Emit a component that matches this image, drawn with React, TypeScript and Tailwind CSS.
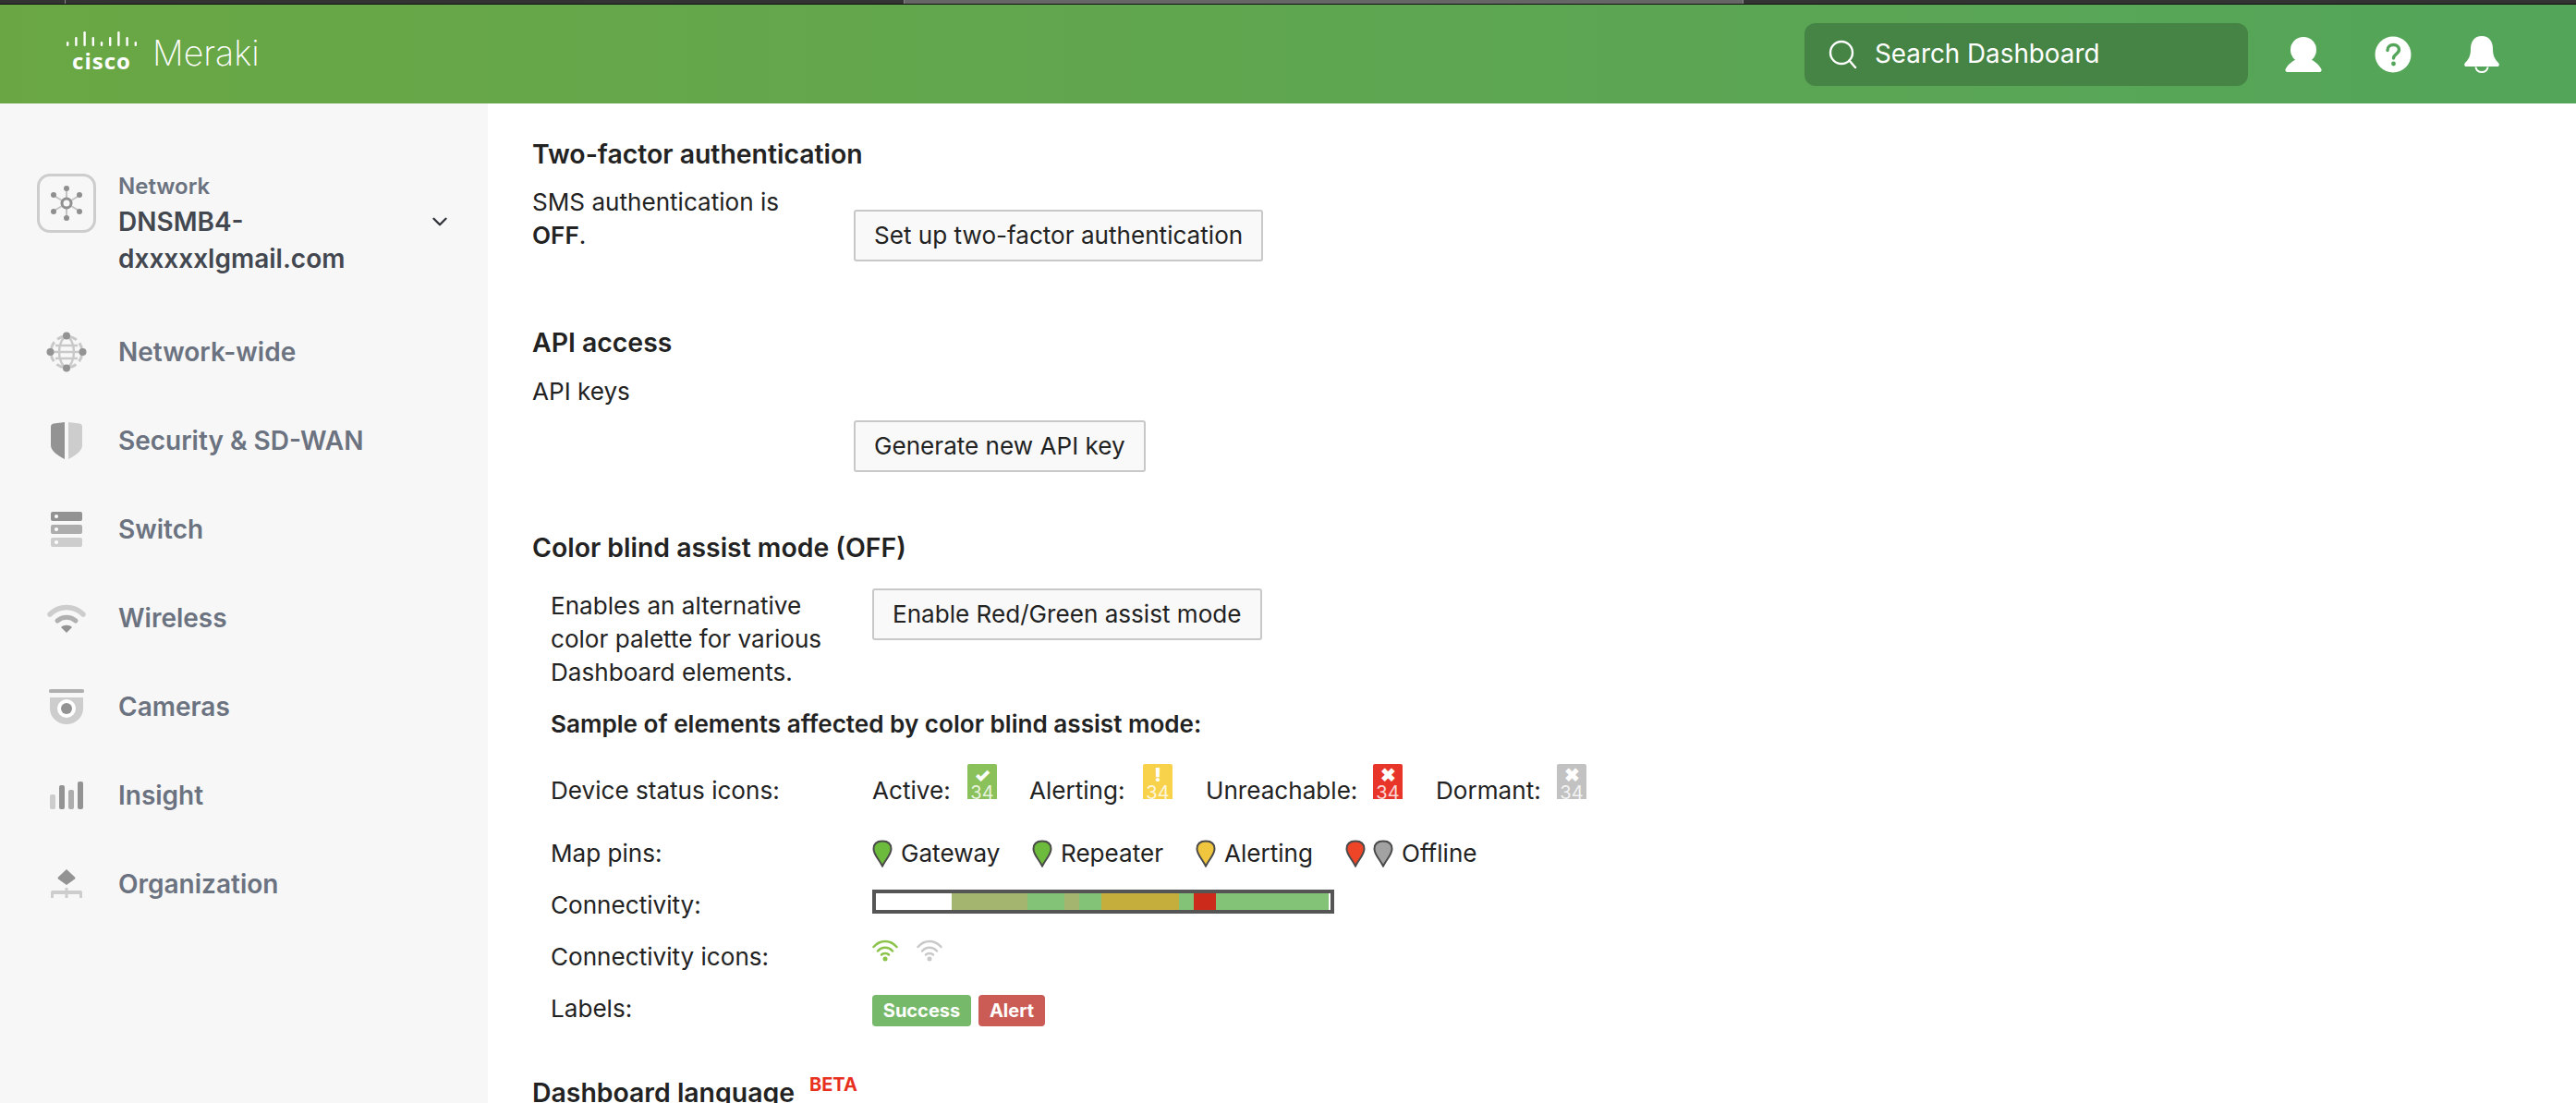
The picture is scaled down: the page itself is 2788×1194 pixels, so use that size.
import { ChevronDown } from 'lucide-react'
import type { ReactNode } from 'react'

function CiscoLogo() {
    const bars = [
        [0, 11, 5], [9.2, 6, 10], [18.4, 0, 16], [27.6, 6, 10], [36.8, 11, 5], [46, 6, 10], [55.2, 0, 16], [64.4, 6, 10], [73.6, 11, 5],
    ]
    return (
        <div className="flex flex-col items-center w-[76px]">
            <svg width="76" height="16" viewBox="0 0 76 16" fill="#fff">
                {bars.map(([x, y, h]) => <rect key={x} x={x} y={y} width="2.4" height={h} rx="1.2" />)}
            </svg>
            <span className="mt-[4px] text-white text-[24px] leading-[24px] font-bold tracking-[1px] font-['Open_Sans',sans-serif]">cisco</span>
        </div>
    )
}

function NavIcon({ name }: { name: string }) {
    if (name === 'network') return (
        <svg width="44" height="44" viewBox="0 0 44 44" fill="none">
            <circle cx="22" cy="22" r="17" stroke="#c9c9c9" strokeWidth="3" strokeDasharray="9 4.400" strokeDashoffset="-2" />
            <ellipse cx="22" cy="22" rx="8" ry="16" stroke="#c9c9c9" strokeWidth="2.500" />
            <path d="M6 22h32M10 15h24M10 29h24" stroke="#c9c9c9" strokeWidth="2.500" />
            <circle cx="22" cy="4.500" r="4" fill="#939393" /><circle cx="22" cy="39.500" r="4" fill="#939393" />
            <circle cx="4.500" cy="22" r="4" fill="#939393" /><circle cx="39.500" cy="22" r="4" fill="#939393" />
        </svg>
    )
    if (name === 'shield') return (
        <svg width="34" height="40" viewBox="0 0 34 40">
            <path d="M15 0v40C7 36 0 31 0 25V5c0-2 1-3 3-3.500z" fill="#939393" />
            <path d="M19 0v40c8-4 15-9 15-15V5c0-2-1-3-3-3.500z" fill="#cdcdcd" />
        </svg>
    )
    if (name === 'switch') return (
        <svg width="34" height="38" viewBox="0 0 34 38">
            <rect width="34" height="10" y="0" rx="2" fill="#939393" /><rect width="34" height="10" y="14" rx="2" fill="#adadad" /><rect width="34" height="10" y="28" rx="2" fill="#cdcdcd" />
            <circle cx="6" cy="5" r="2" fill="#fff" /><circle cx="6" cy="19" r="2" fill="#fff" /><circle cx="6" cy="33" r="2" fill="#fff" />
        </svg>
    )
    if (name === 'wifi') return (
        <svg width="42" height="32" viewBox="0 0 42 32" fill="none">
            <path d="M3 12C13 2 29 2 39 12" stroke="#cdcdcd" strokeWidth="5.500" strokeLinecap="round" />
            <path d="M11 19c6-5 14-5 20 0" stroke="#b0b0b0" strokeWidth="5" strokeLinecap="round" />
            <path d="M15 26c3-3 9-3 12 0l-6 6z" fill="#939393" />
        </svg>
    )
    if (name === 'camera') return (
        <svg width="38" height="38" viewBox="0 0 38 38">
            <rect width="38" height="4" rx="1.500" fill="#b0b0b0" />
            <path d="M1 9h36v12a18 17 0 0 1-36 0z" fill="#cdcdcd" />
            <circle cx="19" cy="21" r="10" fill="#fff" /><circle cx="19" cy="21" r="6" fill="#939393" />
        </svg>
    )
    if (name === 'insight') return (
        <svg width="36" height="30" viewBox="0 0 36 30">
            <rect x="0" y="14" width="6" height="16" rx="2" fill="#cdcdcd" /><rect x="10" y="4" width="6" height="26" rx="2" fill="#939393" />
            <rect x="20" y="9" width="6" height="21" rx="2" fill="#adadad" /><rect x="30" y="0" width="6" height="30" rx="2" fill="#939393" />
        </svg>
    )
    return (
        <svg width="34" height="32" viewBox="0 0 34 32">
            <path d="M17 0l9 8.500a1.500 1.500 0 0 1 0 2L17 17 8 10.500a1.500 1.500 0 0 1 0-2z" fill="#939393" />
            <path d="M15.500 20h3v3H32a2 2 0 0 1 2 2v6h-3v-4H18.500v4h-3v-4H3v4H0v-6a2 2 0 0 1 2-2h13.500z" fill="#cdcdcd" />
        </svg>
    )
}

const navItems = [
    { icon: 'network', label: 'Network-wide' },
    { icon: 'shield', label: 'Security & SD-WAN' },
    { icon: 'switch', label: 'Switch' },
    { icon: 'wifi', label: 'Wireless' },
    { icon: 'camera', label: 'Cameras' },
    { icon: 'insight', label: 'Insight' },
    { icon: 'org', label: 'Organization' },
]

function Sidebar() {
    return (
        <aside className="w-[528px] shrink-0 bg-[#f7f7f7] pt-[76px]">
            <div className="flex pl-[40px]">
                <div className="w-[64px] h-[64px] rounded-[14px] border-[3px] border-[#cdcdcd] flex items-center justify-center">
                    <svg width="36" height="40" viewBox="0 0 36 40" fill="none">
                        <path d="M18 6v28M3 11l30 18M33 11L3 29" stroke="#c4c4c4" strokeWidth="2" />
                        <circle cx="18" cy="20" r="5" fill="#f7f7f7" stroke="#8f8f8f" strokeWidth="3" />
                        {[[18, 4], [18, 36], [4, 11], [32, 11], [4, 29], [32, 29]].map(([cx, cy]) => <circle key={`${cx}-${cy}`} cx={cx} cy={cy} r="3" fill="#8f8f8f" />)}
                    </svg>
                </div>
                <div className="ml-[24px] w-[300px] font-semibold">
                    <div className="text-[24px] leading-[28px] text-[#6b7280]">Network</div>
                    <div className="text-[28px] leading-[40px] mt-[4px] text-[#434750]">DNSMB4-<br />dxxxxxlgmail.com</div>
                </div>
                <ChevronDown className="mt-[39px] ml-[35px] text-[#30343a]" size={26} strokeWidth={2.2} />
            </div>
            <nav className="mt-[33px] flex flex-col">
                {navItems.map(item => (
                    <div key={item.label} className="h-[96px] flex items-center">
                        <div className="w-[128px] flex justify-center pl-[16px] shrink-0"><NavIcon name={item.icon} /></div>
                        <span className="text-[28px] font-semibold text-[#6b7280]">{item.label}</span>
                    </div>
                ))}
            </nav>
        </aside>
    )
}

function Heading({ children, className }: { children: ReactNode, className?: string }) {
    return <h2 className={`text-[28.400px] leading-[36px] font-semibold text-[#222] ${className ?? ''}`}>{children}</h2>
}

function Btn({ children, className }: { children: ReactNode, className?: string }) {
    return (
        <button className={`h-[56px] px-[20px] bg-[#f9f9f9] border-2 border-[#c8c8c8] rounded-[3px] text-[26.100px] text-[#222] whitespace-nowrap ${className ?? ''}`}>
            {children}
        </button>
    )
}

function StatusIcon({ bg, mark }: { bg: string, mark: string }) {
    return (
        <div className={`w-[32px] h-[38px] rounded-t-[2px] overflow-hidden flex flex-col items-center ${bg} text-white`}>
            <div className="h-[20px] text-[20px] leading-[24px] font-black">{mark}</div>
            <div className="text-[20px] leading-[22px] opacity-80">34</div>
        </div>
    )
}

function Pin({ color }: { color: string }) {
    return (
        <svg width="22" height="30" viewBox="0 0 22 30" className="shrink-0">
            <path d="M11 1.500C5 1.500 1.500 4.500 1.500 10c0 6 5 10 9.500 18.500C15.500 20 20.500 16 20.500 10c0-5.500-3.500-8.500-9.500-8.500z" fill={color} stroke="#4a4a4a" strokeWidth="2" />
        </svg>
    )
}

function WifiIcon({ color }: { color: string }) {
    return (
        <svg width="28" height="24" viewBox="0 0 28 24" fill="none" stroke={color} strokeWidth="2.500" strokeLinecap="round">
            <path d="M1.500 8C8.500 0 19.500 0 26.500 8" />
            <path d="M6 12.500c4.500-5 11.500-5 16 0" />
            <path d="M10 16.500c2-2 6-2 8 0" />
            <circle cx="14" cy="21" r="2.500" fill={color} stroke="none" />
        </svg>
    )
}

function SampleRow({ label, className, labelClass, children }: { label: string, className: string, labelClass?: string, children: ReactNode }) {
    return (
        <div className={`flex items-start pl-[20px] ${className}`}>
            <div className={`w-[348px] shrink-0 leading-[36px] ${labelClass ?? ''}`}>{label}</div>
            {children}
        </div>
    )
}

const segments = [
    { w: 'w-[82px]', bg: 'bg-white' },
    { w: 'w-[82px]', bg: 'bg-[#a3b56f]' },
    { w: 'w-[40px]', bg: 'bg-[#82c378]' },
    { w: 'w-[16px]', bg: 'bg-[#a3b56f]' },
    { w: 'w-[24px]', bg: 'bg-[#82c378]' },
    { w: 'w-[84px]', bg: 'bg-[#c6ae3c]' },
    { w: 'w-[16px]', bg: 'bg-[#82c378]' },
    { w: 'w-[24px]', bg: 'bg-[#cc2b1c]' },
    { w: 'w-[122px]', bg: 'bg-[#82c378]' },
    { w: 'w-[2px]', bg: 'bg-white' },
]

export default function App() {
    return (
        <div className="w-[2788px] h-[1194px] overflow-hidden flex flex-col bg-white font-['Inter',sans-serif] text-[26.100px] text-[#222]">
            {/* barra do navegador no topo */}
            <div className="h-[5px] shrink-0 flex bg-[#333] border-b border-[#111]">
                <div className="w-[71px] border-r border-[#888]" />
                <div className="w-[907px]" />
                <div className="w-[909px] bg-[#666] border-x border-[#888]" />
            </div>

            <header className="h-[107px] shrink-0 flex items-center bg-gradient-to-r from-[#6aa744] to-[#53a55a]">
                <div className="ml-[72px] -mt-[5px]"><CiscoLogo /></div>
                <span className="ml-[17px] text-white text-[37.500px] font-extralight">Meraki</span>
                <div className="ml-auto w-[480px] h-[68px] rounded-[12px] bg-[#458445] flex items-center pl-[26px] text-white">
                    <svg width="32" height="32" viewBox="0 0 32 32" fill="none" stroke="#fff" strokeWidth="2.400" strokeLinecap="round">
                        <circle cx="14" cy="14" r="12" />
                        <path d="M22.500 22.500L29 30" />
                    </svg>
                    <span className="ml-[18px] text-[27.800px]">Search Dashboard</span>
                </div>
                <svg width="40" height="38" viewBox="0 0 40 38" fill="#fff" className="ml-[40px]">
                    <circle cx="20" cy="14" r="14" />
                    <path d="M13 24c2 3 12 3 14 0 5 2 10 6 12.500 11 .5 1.500-.5 3-2 3H2.500c-1.500 0-2.500-1.500-2-3C3 30 8 26 13 24z" />
                </svg>
                <svg width="40" height="40" viewBox="0 0 40 40" className="ml-[57px]">
                    <circle cx="20" cy="20" r="19.500" fill="#fff" />
                    <path d="M14 15.500c0-4 3-6 6.500-6s6 2.300 6 5.300c0 4.700-6 4.700-6 9.200" fill="none" stroke="#53a55a" strokeWidth="3.400" strokeLinecap="round" />
                    <circle cx="20.500" cy="30" r="2.400" fill="#53a55a" />
                </svg>
                <svg width="38" height="40" viewBox="0 0 38 40" className="ml-[57px] mr-[83px]">
                    <path d="M19 0c8 0 12 6 12 14 0 7 2 11 6 15 1.500 1.500 1 4-1.500 4h-33C0 33-.5 30.500 1 29c4-4 6-8 6-15C7 6 11 0 19 0z" fill="#fff" />
                    <path d="M12.500 33.500a6.500 5.500 0 0 0 13 0" fill="none" stroke="#fff" strokeWidth="2" />
                </svg>
            </header>

            <div className="flex flex-1 min-h-0">
                <Sidebar />
                <main className="flex-1 pl-[48px] pt-[37px]">
                    <Heading>Two-factor authentication</Heading>
                    <div className="flex mt-[16px]">
                        <p className="w-[348px] pr-[60px] leading-[36px]">SMS authentication is <b className="font-semibold">OFF</b>.</p>
                        <Btn className="mt-[26px]">Set up two-factor authentication</Btn>
                    </div>

                    <Heading className="mt-[70px]">API access</Heading>
                    <div className="mt-[17px] leading-[36px]">API keys</div>
                    <Btn className="mt-[13px] ml-[348px]">Generate new API key</Btn>

                    <Heading className="mt-[64px]">Color blind assist mode (OFF)</Heading>
                    <div className="flex mt-[27px] pl-[20px]">
                        <p className="w-[348px] pr-[40px] leading-[36px]">Enables an alternative color palette for various Dashboard elements.</p>
                        <Btn className="-mt-[1px]">Enable Red/Green assist mode</Btn>
                    </div>
                    <div className="mt-[20px] pl-[20px] leading-[36px] font-semibold">Sample of elements affected by color blind assist mode:</div>

                    <SampleRow label="Device status icons:" className="mt-[25px] h-[79px]" labelClass="pt-[11px] box-content">
                        <div className="flex items-start">
                            <span className="mt-[11px] leading-[36px] w-[103px] whitespace-nowrap">Active:</span>
                            <StatusIcon bg="bg-[#8bc15a]" mark="✓" />
                            <span className="ml-[35px] mt-[11px] leading-[36px] w-[123px] whitespace-nowrap">Alerting:</span>
                            <StatusIcon bg="bg-[#f8d24a]" mark="!" />
                            <span className="ml-[36px] mt-[11px] leading-[36px] w-[181px] whitespace-nowrap">Unreachable:</span>
                            <StatusIcon bg="bg-[#e8352a]" mark="✖" />
                            <span className="ml-[36px] mt-[11px] leading-[36px] w-[131px] whitespace-nowrap">Dormant:</span>
                            <StatusIcon bg="bg-[#c2c2c2]" mark="✖" />
                        </div>
                    </SampleRow>

                    <SampleRow label="Map pins:" className="h-[56px]">
                        <div className="flex items-center h-[36px]">
                            <Pin color="#6dbb3c" />
                            <span className="ml-[9px] w-[142px]">Gateway</span>
                            <Pin color="#6dbb3c" />
                            <span className="ml-[9px] w-[146px]">Repeater</span>
                            <Pin color="#f0c63f" />
                            <span className="ml-[9px] w-[131px]">Alerting</span>
                            <Pin color="#ee4427" />
                            <span className="ml-[8px]" />
                            <Pin color="#a2a2a2" />
                            <span className="ml-[9px]">Offline</span>
                        </div>
                    </SampleRow>

                    <SampleRow label="Connectivity:" className="h-[56px]">
                        <div className="w-[500px] h-[26px] mt-[1px] border-4 border-[#555] flex">
                            {segments.map((s, i) => <div key={i} className={`${s.w} h-full ${s.bg}`} />)}
                        </div>
                    </SampleRow>

                    <SampleRow label="Connectivity icons:" className="h-[56px]">
                        <div className="flex gap-[20px] -mt-[1px]">
                            <WifiIcon color="#8bc34a" />
                            <WifiIcon color="#c9c9c9" />
                        </div>
                    </SampleRow>

                    <SampleRow label="Labels:" className="h-[91px]">
                        <div className="flex gap-[8px] mt-[3px] text-[20px] font-bold text-white">
                            <span className="w-[107px] h-[34px] rounded-[4px] bg-[#77b96b] flex items-center justify-center">Success</span>
                            <span className="w-[72px] h-[34px] rounded-[4px] bg-[#cb5c55] flex items-center justify-center">Alert</span>
                        </div>
                    </SampleRow>

                    <div className="flex items-start">
                        <Heading>Dashboard language</Heading>
                        <sup className="ml-[16px] -mt-[1px] text-[20px] leading-[20px] font-bold text-[#e8301f] static">BETA</sup>
                    </div>
                </main>
            </div>
        </div>
    )
}
